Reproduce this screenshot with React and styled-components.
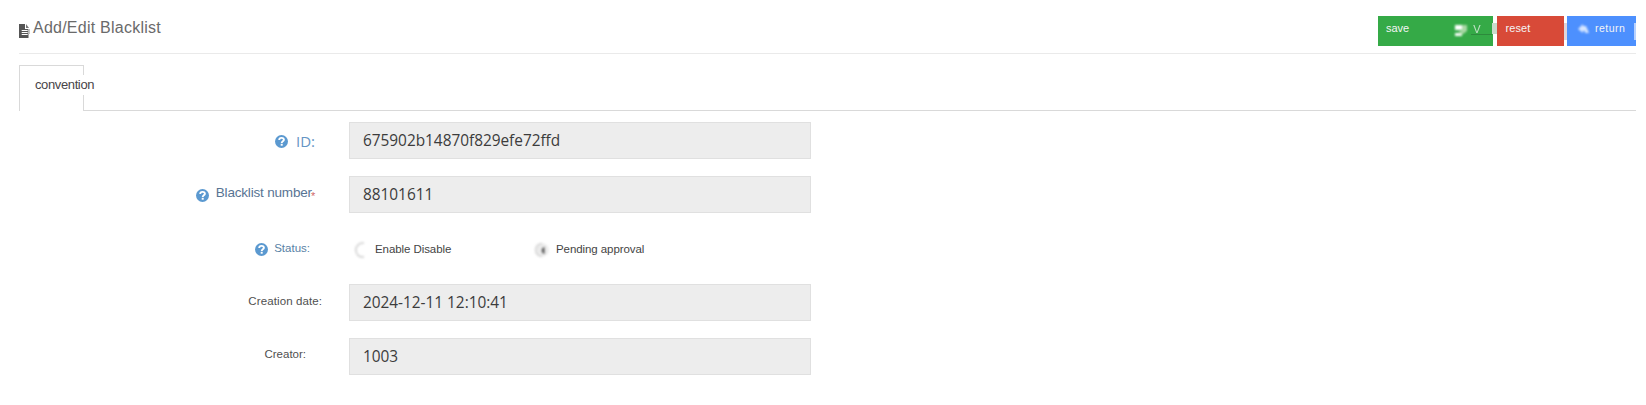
import React from "react";
import styled, { createGlobalStyle } from "styled-components";

const GlobalStyle = createGlobalStyle`
  * { box-sizing: border-box; }
  body {
    margin: 0;
    background: #fff;
    color: #444;
    font-family: "Liberation Sans", sans-serif;
  }
`;

const Page = styled.main`
  height: 405px;
  padding: 0 10px 0 19px;
  overflow: hidden;
`;

const Header = styled.header`
  display: flex;
  justify-content: space-between;
  height: 54px;
  padding-top: 16px;
  border-bottom: 1px solid #eaeaea;
`;

const Title = styled.h1`
  display: flex;
  align-items: flex-start;
  gap: 3px;
  margin: 0;
  color: #6a6a6a;
  font: 400 16px/24px "Liberation Sans", sans-serif;
  letter-spacing: 0.24px;
  svg { margin-top: 8px; }
`;

const Actions = styled.div`
  display: flex;
`;

const Button = styled.button`
  display: flex;
  align-items: flex-start;
  width: ${(p) => p.$width}px;
  height: 30px;
  margin: 0 0 0 ${(p) => p.$gap || 0}px;
  padding: 4px 0 0 ${(p) => p.$indent}px;
  border: 0;
  background: ${(p) => p.$color};
  color: #f4f4f4;
  font: 400 ${(p) => p.$size || 11}px/16px "Liberation Sans", sans-serif;
  letter-spacing: ${(p) => p.$spacing || 0}px;
  svg { filter: blur(0.8px); flex: none; }
`;

const SaveIcon = styled.svg`
  margin: 4px 3px 0 45px;
`;

const SaveMark = styled.span`
  flex: none;
  width: 21px;
  height: 15px;
  padding: 1px 0 0 2px;
  border-bottom: 1px solid #2b8039;
  text-align: left;
  opacity: 0.75;
`;

const Edge = styled.span`
  flex: none;
  width: ${(p) => p.$width}px;
  height: ${(p) => p.$height}px;
  margin: 3px 0 0 ${(p) => p.$offset || 0}px;
  background: ${(p) => p.$color};
  filter: blur(0.6px);
`;

const ReturnIcon = styled.svg`
  margin: 4px 5px 0 0;
`;

const TabBar = styled.nav`
  display: flex;
  height: 57px;
  padding-top: 11px;
  border-bottom: 1px solid #d9d9d9;
`;

const Tab = styled.a`
  width: 65px;
  height: 46px;
  padding: 9px 0 0 15px;
  border: 1px solid #d9d9d9;
  border-bottom: 0;
  background: #fff;
  color: #484448;
  font: 400 13px/20px "Liberation Sans", sans-serif;
  letter-spacing: -0.38px;
  white-space: nowrap;
  span { display: inline-block; background: #fff; }
`;

const Form = styled.form`
  display: flex;
  flex-direction: column;
  gap: 17px;
  padding-top: 11px;
`;

const Row = styled.div`
  display: flex;
  height: 37px;
`;

const Label = styled.label`
  display: flex;
  justify-content: flex-end;
  align-items: flex-start;
  width: 330px;
  padding: ${(p) => p.$top}px ${(p) => p.$inset}px 0 0;
  color: ${(p) => p.$color || "#505050"};
  font: ${(p) => p.$font || '400 11.5px/16px "Liberation Sans", sans-serif'};
  letter-spacing: ${(p) => p.$spacing || 0}px;
  white-space: nowrap;
  svg { flex: none; margin: ${(p) => p.$iconTop || 0}px ${(p) => p.$iconGap || 0}px 0 0; }
`;

const Required = styled.span`
  margin: 3px 0 0 -1px;
  color: #d06868;
  font-size: 11px;
`;

const Field = styled.input`
  width: 462px;
  height: 37px;
  padding: 0 13px;
  border: 1px solid #e0e0e0;
  border-radius: 0;
  outline: 0;
  background: #ededed;
  color: #3c3c3c;
  font: 400 15.4px "Open Sans", sans-serif;
  letter-spacing: -0.02px;
`;

const Options = styled.div`
  display: flex;
  padding-top: 11px;
`;

const Option = styled.label`
  display: flex;
  align-items: flex-start;
  width: ${(p) => p.$width}px;
  color: #444;
  font: 400 11.5px/16px "Liberation Sans", sans-serif;
  letter-spacing: -0.08px;
  white-space: nowrap;
  svg { flex: none; margin: 1px 7px 0 4px; filter: blur(0.9px); }
`;

const HelpIcon = () => (
  <svg width="13" height="13" viewBox="0 0 13 13">
    <circle cx="6.5" cy="6.5" r="6.5" fill="#5b99d0" />
    <path d="M4.2 4.9C4.2 2.1 8.9 2.2 8.9 4.8C8.9 6.3 6.7 6.3 6.7 7.9" fill="none" stroke="#fff" strokeWidth="1.9" />
    <rect x="5.7" y="8.8" width="2" height="1.9" fill="#fff" />
  </svg>
);

const PageIcon = () => (
  <svg width="11" height="14" viewBox="0 0 11 14">
    <path d="M0 0H6V5H9.5V14H0Z" fill="#555" />
    <path d="M7 0L10 4H7Z" fill="#777" />
    <path d="M9.5 5H11V10H9.5Z" fill="#c4c4c4" />
    <path d="M2.7 6.5H8.7M2.7 8.5H8.7M2.7 10.5H8.7" stroke="#fff" strokeWidth="1" />
  </svg>
);

const Radio = ({ checked }) => (
  <svg width="15" height="16" viewBox="0 0 15 16">
    {checked ? (
      <>
        <circle cx="8" cy="8" r="6.8" fill="#ebebeb" />
        <path d="M8 1.5A6.5 6.5 0 0 0 8 14.5" fill="none" stroke="#d8d8d8" strokeWidth="1.6" />
        <path d="M10.5 5A3.6 3.6 0 0 0 10.5 12Z" fill="#555" />
      </>
    ) : (
      <path d="M11 1.2A7 7 0 1 0 11 15" fill="none" stroke="#d9d9d9" strokeWidth="2" />
    )}
  </svg>
);

export default function App() {
  return (
    <Page>
      <GlobalStyle />
      <Header>
        <Title><PageIcon />Add/Edit Blacklist</Title>
        <Actions>
          <Button $width={115} $indent={8} $color="#35aa47">
            save
            <SaveIcon width="14" height="13" viewBox="0 0 14 13">
              <path d="M1 1H8V6H1ZM1 9H8V12H1Z" fill="#fff" />
              <path d="M8 1H13V7L9 10H5V7H8Z" fill="#a9d8a5" />
            </SaveIcon>
            <SaveMark>V</SaveMark>
            <Edge $width={5} $height={11} $color="#c8dccb" />
          </Button>
          <Button $width={67} $gap={4} $indent={8.5} $color="#d84a38" $spacing={0.1}>
            reset
            <Edge $width={3} $height={17} $offset={34} $color="#dfd5dc" />
          </Button>
          <Button $width={69} $gap={3} $indent={11} $color="#4d90fe" $size={10.5} $spacing={0.5}>
            <ReturnIcon width="12" height="10" viewBox="0 0 12 10">
              <path d="M0 5L5 0V2H8L11 9H7V7H5V9Z" fill="#e4efff" opacity="0.9" />
            </ReturnIcon>
            return
            <Edge $width={2} $height={17} $offset={9} $color="#b7d1ff" />
          </Button>
        </Actions>
      </Header>
      <TabBar>
        <Tab><span>convention</span></Tab>
      </TabBar>
      <Form>
        <Row>
          <Label $top={9} $inset={34} $color="#6595c4" $font={'400 15px/20px "Open Sans", sans-serif'} $iconTop={4} $iconGap={8}>
            <HelpIcon />ID:
          </Label>
          <Field readOnly value="675902b14870f829efe72ffd" />
        </Row>
        <Row>
          <Label $top={8} $inset={34} $color="#587493" $font={'400 13.5px/18px "Liberation Sans", sans-serif'} $spacing={-0.18} $iconTop={5} $iconGap={7}>
            <HelpIcon />Blacklist number<Required>*</Required>
          </Label>
          <Field readOnly value="88101611" />
        </Row>
        <Row>
          <Label $top={10} $inset={39} $color="#587fa5" $iconTop={3} $iconGap={6}>
            <HelpIcon />Status:
          </Label>
          <Options>
            <Option $width={181}><Radio />Enable Disable</Option>
            <Option $width={130}><Radio checked />Pending approval</Option>
          </Options>
        </Row>
        <Row>
          <Label $top={9} $inset={27} $spacing={0.1}>Creation date:</Label>
          <Field readOnly value="2024-12-11 12:10:41" />
        </Row>
        <Row>
          <Label $top={8} $inset={43}>Creator:</Label>
          <Field readOnly value="1003" />
        </Row>
      </Form>
    </Page>
  );
}
